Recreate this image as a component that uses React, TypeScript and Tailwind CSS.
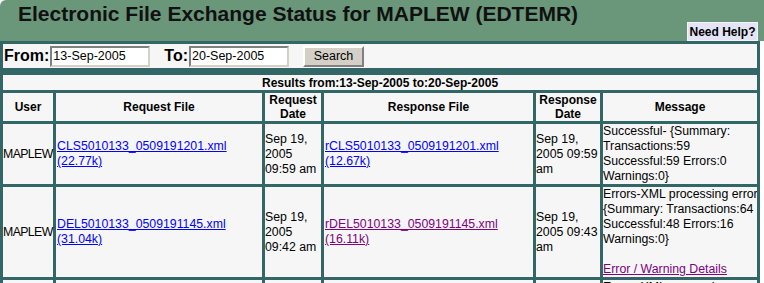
const teal = 'bg-[#336666]';

type Row = {
  user: string;
  requestFile: string;
  requestSize: string;
  requestDate: string[];
  responseFile: string;
  responseSize: string;
  responseVisited: boolean;
  responseDate: string[];
  message: string[];
  details?: boolean;
};

const rows: Row[] = [
  {
    user: 'MAPLEW',
    requestFile: 'CLS5010133_0509191201.xml',
    requestSize: '(22.77k)',
    requestDate: ['Sep 19,', '2005', '09:59 am'],
    responseFile: 'rCLS5010133_0509191201.xml',
    responseSize: '(12.67k)',
    responseVisited: false,
    responseDate: ['Sep 19,', '2005 09:59', 'am'],
    message: ['Successful- {Summary:', 'Transactions:59', 'Successful:59 Errors:0', 'Warnings:0}'],
  },
  {
    user: 'MAPLEW',
    requestFile: 'DEL5010133_0509191145.xml',
    requestSize: '(31.04k)',
    requestDate: ['Sep 19,', '2005', '09:42 am'],
    responseFile: 'rDEL5010133_0509191145.xml',
    responseSize: '(16.11k)',
    responseVisited: true,
    responseDate: ['Sep 19,', '2005 09:43', 'am'],
    message: ['Errors-XML processing error', '{Summary: Transactions:64', 'Successful:48 Errors:16', 'Warnings:0}'],
    details: true,
  },
  {
    user: 'MAPLEW',
    requestFile: 'ADD5010133_0509191130.xml',
    requestSize: '(28.52k)',
    requestDate: ['Sep 19,', '2005', '09:31 am'],
    responseFile: 'rADD5010133_0509191130.xml',
    responseSize: '(14.80k)',
    responseVisited: true,
    responseDate: ['Sep 19,', '2005 09:32', 'am'],
    message: ['Errors-XML processing error', '{Summary: Transactions:57', 'Successful:51 Errors:6', 'Warnings:0}'],
    details: true,
  },
];

function Lines({ lines }: { lines: string[] }) {
  return (
    <>
      {lines.map((l, i) => (
        <div key={i} className="whitespace-nowrap">
          {l}
        </div>
      ))}
    </>
  );
}

export default function App() {
  const cell = 'bg-[#f6f6f6] p-0 align-middle';
  const head = 'bg-[#f6f6f6] p-0 text-center align-middle font-bold text-[12px] leading-[14px]';
  const link = 'underline text-[#0000ff]';

  return (
    <div className="w-[764px] bg-white font-['Liberation_Sans',Arial,sans-serif] text-black">
      <div className="flex h-[41px] justify-between rounded-tl-[6px] bg-[#6a967a]">
        <h1 className="ml-[18px] mt-[1px] text-[21px] font-bold leading-[26px] text-[#111]">
          Electronic File Exchange Status for MAPLEW (EDTEMR)
        </h1>
        <button className="mb-0 mr-[6px] mt-[22px] h-[19px] w-[71px] border border-[#f4f4ff] bg-[#e4e4f6] text-[12px] font-bold leading-[16px] text-black">
          Need Help?
        </button>
      </div>

      <div className={`w-[760px] ${teal}`}>
        <div className="px-[3px] pt-[3px]">
          <div className="flex h-[24px] items-center bg-[#f6f6f6] pl-[1px]">
            <span className="text-[16px] font-bold leading-[18px]">From:</span>
            <input
              readOnly
              value="13-Sep-2005"
              className="ml-[1px] h-[21px] w-[100px] border-2 border-b-[#d4d0c8] border-l-[#808080] border-r-[#d4d0c8] border-t-[#808080] bg-white px-[1px] text-[12.5px] outline-none"
            />
            <span className="ml-[14px] text-[16px] font-bold leading-[18px]">To:</span>
            <input
              readOnly
              value="20-Sep-2005"
              className="ml-[1px] h-[21px] w-[100px] border-2 border-b-[#d4d0c8] border-l-[#808080] border-r-[#d4d0c8] border-t-[#808080] bg-white px-[1px] text-[12.5px] outline-none"
            />
            <button className="ml-[14px] h-[21px] w-[61px] border-2 border-b-[#808080] border-l-white border-r-[#808080] border-t-white bg-[#d4d0c8] text-[12.5px] leading-[14px]">
              Search
            </button>
          </div>
        </div>
        <div className="h-[4px]" />
        <table className="w-[760px] table-fixed border-separate border-spacing-[3px] text-[12.3px] leading-[15px]">
          <colgroup>
            <col className="w-[50px]" />
            <col className="w-[206px]" />
            <col className="w-[56px]" />
            <col className="w-[209px]" />
            <col className="w-[64px]" />
            <col className="w-[154px]" />
          </colgroup>
          <tbody>
            <tr>
              <td colSpan={6} className={`${head} h-[15px]`}>
                Results from:13-Sep-2005 to:20-Sep-2005
              </td>
            </tr>
            <tr className="h-[28px]">
              <td className={head}>User</td>
              <td className={head}>Request File</td>
              <td className={head}>
                Request
                <br />
                Date
              </td>
              <td className={head}>Response File</td>
              <td className={head}>
                Response
                <br />
                Date
              </td>
              <td className={head}>Message</td>
            </tr>
            {rows.map((r, i) => (
              <tr key={i}>
                <td className={`${cell} whitespace-nowrap tracking-[-0.6px]`}>{r.user}</td>
                <td className={`${cell} pl-[1px]`}>
                  <a href="#" className={link}>
                    {r.requestFile}
                    <br />
                    {r.requestSize}
                  </a>
                </td>
                <td className={cell}>
                  <Lines lines={r.requestDate} />
                </td>
                <td className={`${cell} pl-[1px]`}>
                  <a href="#" className={r.responseVisited ? 'underline text-[#800080]' : link}>
                    {r.responseFile}
                    <br />
                    {r.responseSize}
                  </a>
                </td>
                <td className={cell}>
                  <Lines lines={r.responseDate} />
                </td>
                <td className={`${cell} overflow-hidden align-top`}>
                  <Lines lines={r.message} />
                  {r.details && (
                    <>
                      <div className="h-[15px]" />
                      <a href="#" className="whitespace-nowrap underline text-[#800080]">
                        Error / Warning Details
                      </a>
                    </>
                  )}
                </td>
              </tr>
            ))}
          </tbody>
        </table>
      </div>
    </div>
  );
}
